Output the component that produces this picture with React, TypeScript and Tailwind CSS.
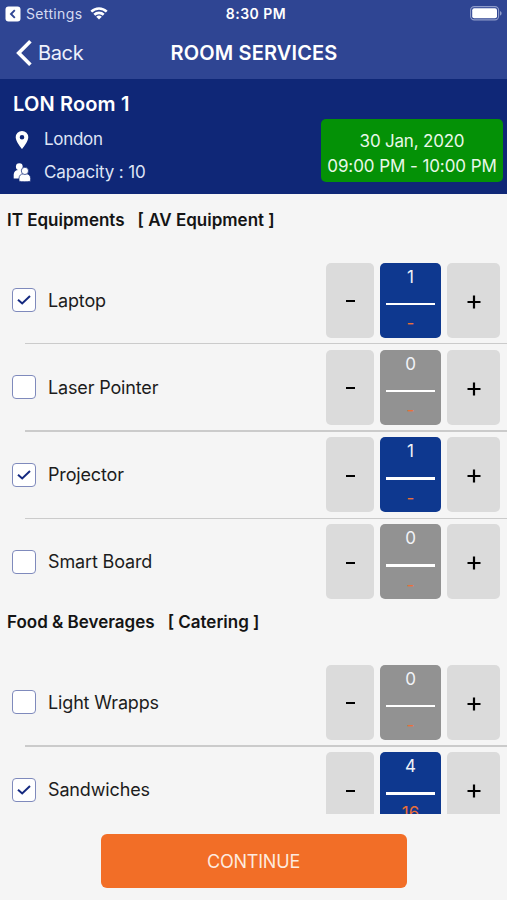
import { useState } from "react"

interface ServiceItem {
  name: string
  quantity: number
  price: string
}

interface ServiceGroup {
  title: string
  category: string
  items: ServiceItem[]
}

const initialGroups: ServiceGroup[] = [
  {
    title: "IT Equipments",
    category: "[ AV Equipment ]",
    items: [
      { name: "Laptop", quantity: 1, price: "-" },
      { name: "Laser Pointer", quantity: 0, price: "-" },
      { name: "Projector", quantity: 1, price: "-" },
      { name: "Smart Board", quantity: 0, price: "-" },
    ],
  },
  {
    title: "Food & Beverages",
    category: "[ Catering ]",
    items: [
      { name: "Light Wrapps", quantity: 0, price: "-" },
      { name: "Sandwiches", quantity: 4, price: "16" },
    ],
  },
]

function StatusBar() {
  return (
    <div className="grid h-[27px] grid-cols-[1fr_auto_1fr] items-center pl-[5px] text-[14px]">
      <div className="flex items-center">
        <svg width="16" height="16" viewBox="0 0 16 16">
          <rect x="0.500" y="0.500" width="15" height="15" rx="3" fill="#fff" />
          <path d="M9.800 4.200 6 8l3.800 3.800" fill="none" stroke="#2f4593" strokeWidth="1.900" />
        </svg>
        <span className="ml-[5px] tracking-[0.350px] text-[#d5dbf2]">Settings</span>
        <svg className="ml-[8px] mb-px" width="18" height="13" viewBox="0 0 18 13" fill="none" stroke="#fff" strokeWidth="2.600">
          <path d="M1.300 4.600a11 11 0 0 1 15.400 0" />
          <path d="M4.300 7.800a6.700 6.700 0 0 1 9.400 0" />
          <path d="M9 12.600 6.200 9.800a4 4 0 0 1 5.600 0z" fill="#fff" stroke="none" />
        </svg>
      </div>
      <span className="font-semibold tracking-[0.500px]">8:30 PM</span>
      <svg className="mr-[5px] justify-self-end" width="32" height="15" viewBox="0 0 32 15">
        <rect x="0.600" y="0.600" width="28" height="13.300" rx="3.600" fill="none" stroke="#8f9cca" strokeWidth="1.100" />
        <rect x="2.200" y="2.200" width="24.800" height="10.100" rx="2" fill="#fff" />
        <path d="M30 5v4.600c1-.4 1.600-1.300 1.600-2.300S31 5.400 30 5z" fill="#8f9cca" />
      </svg>
    </div>
  )
}

function NavBar() {
  return (
    <div className="grid h-[52px] grid-cols-[1fr_auto_1fr] items-center pb-px pl-4 pr-[15px]">
      <button className="flex items-center text-[20px]">
        <svg width="16" height="26" viewBox="0 0 16 26" fill="none" stroke="#fff" strokeWidth="3.600">
          <path d="M14.400 1.300 2.700 13l11.700 11.700" />
        </svg>
        <span className="ml-[6px] tracking-[-0.350px] text-[#eef1fb]">Back</span>
      </button>
      <h1 className="text-[20px] font-semibold tracking-[0.150px]">ROOM SERVICES</h1>
    </div>
  )
}

function RoomInfo() {
  return (
    <div className="flex h-[115px] justify-between bg-[#0f2777] pl-[13px] pr-[4px] text-white">
      <div className="pt-[11px]">
        <h2 className="text-[20px] font-semibold leading-7 tracking-[0.150px]">LON Room 1</h2>
        <div className="mt-[5px] flex h-[33px] items-center text-[17px] text-[#dfe4f5]">
          <svg className="mx-[2px]" width="14" height="18" viewBox="0 0 14 18">
            <path
              d="M7 0a6.300 6.300 0 0 0-6.300 6.300C.7 11 7 18 7 18s6.300-7 6.300-11.700A6.300 6.300 0 0 0 7 0zm0 8.600a2.300 2.300 0 1 1 0-4.600 2.300 2.300 0 0 1 0 4.600z"
              fill="#fff"
            />
          </svg>
          <span className="ml-[13px] tracking-[-0.300px]">London</span>
        </div>
        <div className="flex h-[33px] items-center text-[17px] text-[#dfe4f5]">
          <svg width="18" height="19" viewBox="0 0 18 19" fill="#fff">
            <circle cx="6.300" cy="3.700" r="3.400" />
            <path d="M.7 15.500v-3.700c0-2.800 2-4.800 4.600-4.800h2.200c2.400 0 4.300 1.900 4.300 4.300v4.200z" />
            <g stroke="#0f2777" strokeWidth="0.700">
              <path d="M6 18.200v-2.700c0-3 1.900-4.700 4.400-4.700h2.800c2.500 0 4.400 1.700 4.400 4.700v2.700c-3 .7-8.600.7-11.600 0z" />
              <circle cx="11.900" cy="7.900" r="3.600" />
            </g>
          </svg>
          <span className="ml-[13px] tracking-[-0.150px]">Capacity : 10</span>
        </div>
      </div>
      <div className="mt-[40px] flex h-[63px] w-[182px] flex-col items-center rounded-[5px] bg-[#049106] pt-[10px] text-[17px] leading-[24.500px] text-[#e9f8e9]">
        <span className="tracking-[-0.200px]">30 Jan, 2020</span>
        <span className="whitespace-nowrap tracking-[-0.080px]">09:00 PM - 10:00 PM</span>
      </div>
    </div>
  )
}

interface ServiceRowProps {
  item: ServiceItem
  isLast: boolean
  onChange: (quantity: number) => void
}

function ServiceRow({ item, isLast, onChange }: ServiceRowProps) {
  const isSelected = item.quantity > 0

  return (
    <div>
      <div className="flex h-[86px] items-center pl-3 pr-[7px]">
        <button
          onClick={() => onChange(isSelected ? 0 : 1)}
          className="flex h-6 w-6 items-center justify-center rounded-[4px] border-[1.500px] border-[#7f8abc] bg-white"
        >
          {isSelected && (
            <svg width="14" height="10" viewBox="0 0 14 10" fill="none" stroke="#152a80" strokeWidth="2">
              <path d="M1 4.700 5.200 8.500 13 1" />
            </svg>
          )}
        </button>
        <span className="ml-3 flex-1 text-[18px] tracking-[-0.150px] text-[#1c1c1c]">{item.name}</span>
        <div className="flex h-[75px] gap-[6px] text-black">
          <button
            onClick={() => onChange(Math.max(0, item.quantity - 1))}
            className="flex w-[48px] items-center justify-center rounded-[5px] bg-[#dbdbdb]"
          >
            <span className="mt-[2px] h-[2px] w-[9px] bg-black" />
          </button>
          <div
            className={`flex w-[61px] flex-col items-center rounded-[5px] text-[17px] ${
              isSelected ? "bg-[#0e388f]" : "bg-[#929292]"
            }`}
          >
            <span className="mt-[2px] h-[24px] leading-[24px] text-[#f1f3f8]">{item.quantity}</span>
            <span className="mt-[14px] h-[2.500px] w-[49px] shrink-0 bg-white" />
            <span className="mt-[6px] leading-[24px] text-[#ea6f38]">{item.price}</span>
          </div>
          <button
            onClick={() => onChange(item.quantity + 1)}
            className="flex w-[53px] items-center justify-center rounded-[5px] bg-[#dbdbdb]"
          >
            <svg className="ml-px mt-[3px]" width="14" height="14" viewBox="0 0 14 14" stroke="#000" strokeWidth="2.200">
              <path d="M7 .5v13M.5 7h13" />
            </svg>
          </button>
        </div>
      </div>
      <div className={`ml-[25px] h-[1.200px] ${isLast ? "" : "bg-[#cbcbcb]"}`} />
    </div>
  )
}

export default function App() {
  const [groups, setGroups] = useState(initialGroups)

  const handleQuantityChange = (title: string, name: string, quantity: number) => {
    setGroups(
      groups.map((group) =>
        group.title === title
          ? { ...group, items: group.items.map((item) => (item.name === name ? { ...item, quantity } : item)) }
          : group,
      ),
    )
  }

  return (
    <div className="flex h-[900px] w-[507px] flex-col overflow-hidden bg-[#f5f5f5] font-['Inter',sans-serif]">
      <header className="bg-[#2f4593] text-white">
        <StatusBar />
        <NavBar />
      </header>
      <RoomInfo />

      {/* Services */}
      <main className="h-[620px] overflow-hidden pt-[9.700px]">
        {groups.map((group) => (
          <section key={group.title}>
            <h3 className="flex h-[53.500px] gap-[13px] pl-[7px] pt-[4px] text-[17px] font-semibold leading-6 text-[#141414]">
              <span>{group.title}</span>
              <span>{group.category}</span>
            </h3>
            {group.items.map((item, index) => (
              <ServiceRow
                key={item.name}
                item={item}
                isLast={index === group.items.length - 1}
                onChange={(quantity) => handleQuantityChange(group.title, item.name, quantity)}
              />
            ))}
          </section>
        ))}
      </main>

      <footer className="flex justify-center pt-5">
        <button className="h-[54px] w-[306px] rounded-[6px] bg-[#f26e27] text-[18px] tracking-[-0.200px] text-[#fdeadf]">
          CONTINUE
        </button>
      </footer>
    </div>
  )
}
